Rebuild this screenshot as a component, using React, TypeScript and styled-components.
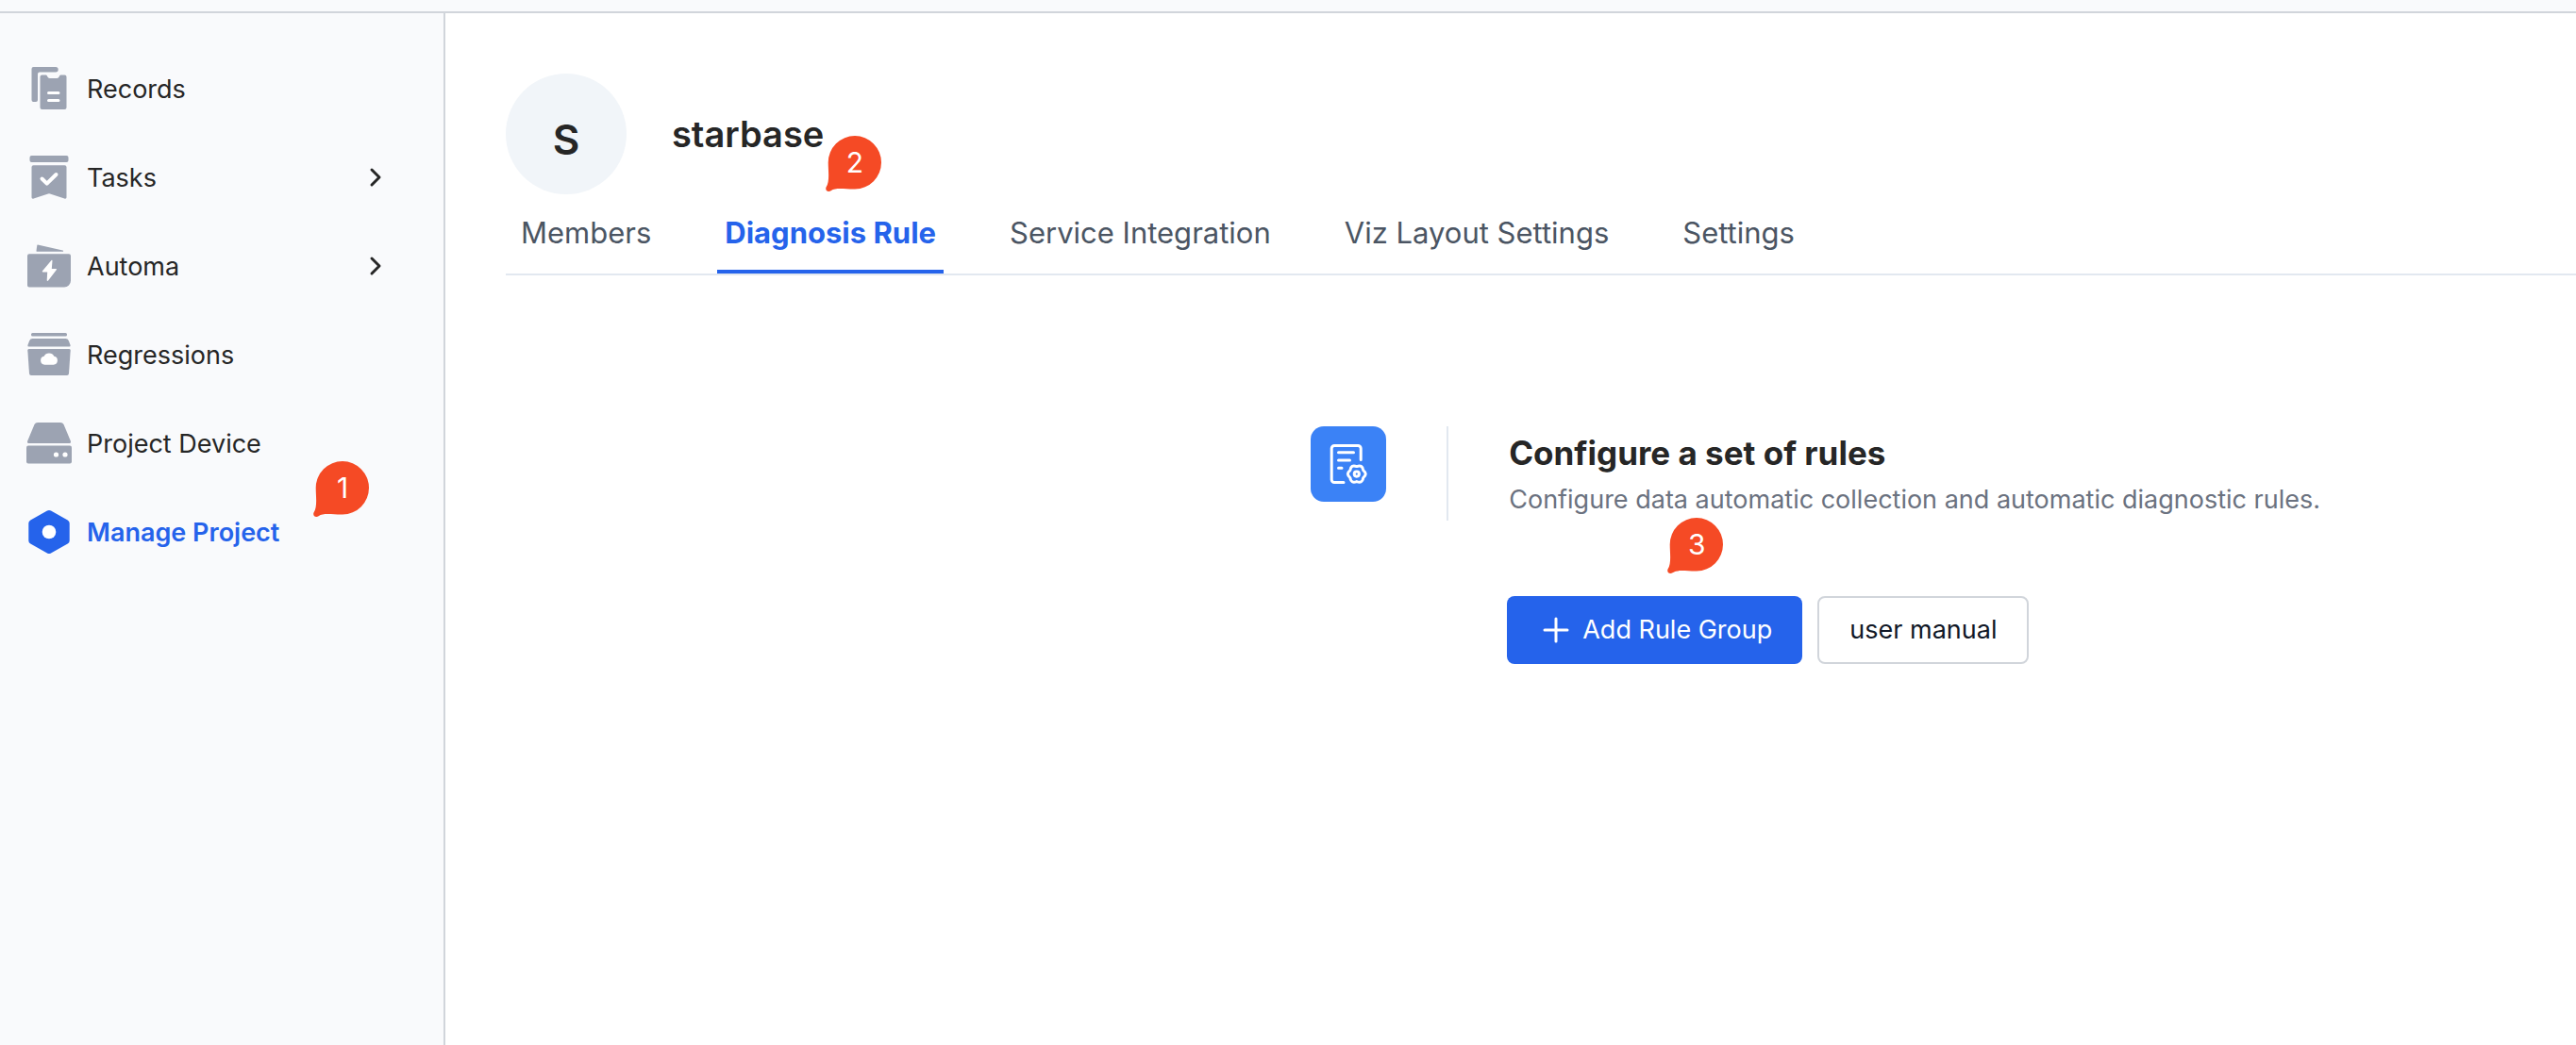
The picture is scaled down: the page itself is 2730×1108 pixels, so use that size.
import React from "react";
import styled, { createGlobalStyle, css } from "styled-components";

const blue = "#2563eb";
const ink = "#262626";
const iconGrey = "#9ca3b2";

const GlobalStyle = createGlobalStyle`
  *, *::before, *::after { box-sizing: border-box; }
  html, body { margin: 0; background: #ffffff; }
  body { font-family: Inter, "Liberation Sans", Arial, sans-serif; color: ${ink}; }
  h1, h2, p, ul { margin: 0; padding: 0; }
  ul { list-style: none; }
  a { color: inherit; text-decoration: none; }
`;

const Page = styled.div`
  min-height: 100vh;
  display: flex;
  flex-direction: column;
`;

const TopBar = styled.header`
  height: 14px;
  flex: none;
  background: #f9fafc;
  border-bottom: 2px solid #d1d5db;
`;

const Body = styled.div`
  flex: 1;
  display: flex;
`;

const Sidebar = styled.nav`
  width: 472px;
  flex: none;
  padding: 40px 56px 40px 28px;
  background: #f9fafc;
  border-right: 2px solid #d1d5db;
`;

const NavList = styled.ul`
  display: flex;
  flex-direction: column;
  gap: 14px;
`;

const NavItem = styled.li`
  position: relative;
`;

const NavLink = styled.a<{ $active?: boolean }>`
  height: 80px;
  display: flex;
  align-items: center;
  gap: 16px;
  font-size: 27px;
  line-height: 40px;
  ${({ $active }) => $active && css`
    color: ${blue};
    font-weight: 600;
  `}
`;

const NavLabel = styled.span`
  padding-top: 2px;
`;

const NavIcon = styled.svg`
  width: 48px;
  height: 48px;
  flex: none;
`;

const Chevron = styled.svg`
  width: 32px;
  height: 32px;
  margin-left: auto;
  fill: none;
  stroke: ${ink};
  stroke-width: 3;
  stroke-linecap: round;
  stroke-linejoin: round;
`;

const Main = styled.main`
  flex: 1;
  min-width: 0;
  padding: 64px 0 64px 64px;
`;

const ProjectHeader = styled.div`
  display: flex;
  align-items: center;
  gap: 48px;
`;

const Avatar = styled.div`
  width: 128px;
  height: 128px;
  padding-top: 12px;
  display: flex;
  align-items: center;
  justify-content: center;
  border-radius: 50%;
  background: #f1f5f9;
  font-size: 44px;
  font-weight: 600;
`;

const ProjectName = styled.h1`
  position: relative;
  font-size: 38px;
  line-height: 48px;
  font-weight: 600;
`;

const Tabs = styled.nav`
  display: flex;
  gap: 62px;
  padding-left: 8px;
  border-bottom: 2px solid #e2e8f0;
`;

const Tab = styled.a<{ $active?: boolean }>`
  padding: 21px 8px 19px;
  border-bottom: 4px solid transparent;
  color: #4b5563;
  font-size: 31px;
  line-height: 40px;
  white-space: nowrap;
  ${({ $active }) => $active && css`
    border-color: ${blue};
    color: ${blue};
    font-weight: 700;
  `}
`;

const EmptyState = styled.section`
  margin-top: 160px;
  display: grid;
  grid-template-columns: 7fr 11fr;
`;

const EmptyContent = styled.div`
  grid-column: 2;
  display: flex;
  align-items: flex-start;
  gap: 64px;
`;

const RuleTile = styled.div`
  width: 80px;
  height: 80px;
  flex: none;
  display: flex;
  align-items: center;
  justify-content: center;
  border-radius: 14px;
  background: #3b82f6;
`;

const Intro = styled.div`
  padding-left: 64px;
  border-left: 2px solid #e2e8f0;
`;

const IntroTitle = styled.h2`
  font-size: 35px;
  line-height: 56px;
  font-weight: 700;
`;

const IntroText = styled.p`
  padding: 2px 0;
  color: #6b7280;
  font-size: 27px;
  line-height: 40px;
`;

const Actions = styled.div`
  position: relative;
  display: flex;
  gap: 16px;
  padding: 80px 0 0 64px;
`;

const Button = styled.button<{ $primary?: boolean }>`
  height: 72px;
  padding: 0 32px;
  display: flex;
  align-items: center;
  gap: 8px;
  border: 2px solid #d1d5db;
  border-radius: 8px;
  background: #ffffff;
  color: #111827;
  font-family: inherit;
  font-size: 27px;
  line-height: 40px;
  white-space: nowrap;
  ${({ $primary }) => $primary && css`
    border: 0;
    background: ${blue};
    color: #ffffff;
  `}
`;

const Pin = styled.span<{ $left: number; $top: number }>`
  position: absolute;
  left: ${({ $left }) => $left}px;
  top: ${({ $top }) => $top}px;
  width: 60px;
  height: 60px;
  padding-left: 2px;
  color: #ffffff;
  font-size: 30px;
  line-height: 56px;
  font-weight: 400;
  text-align: center;
`;

const PinShape = styled.svg`
  position: absolute;
  inset: 0;
  width: 60px;
  height: 60px;
`;

const PinNumber = styled.span`
  position: relative;
`;

function StepPin({ step, left, top }: { step: number; left: number; top: number }) {
  return (
    <Pin $left={left} $top={top}>
      <PinShape viewBox="0 0 60 60" aria-hidden="true">
        <path
          fill="#f54a25"
          d="M31 0A28.3 28.3 0 0 1 59 28.3A28.3 28.3 0 0 1 31 56.6C21 56.8 11 54.5 5.6 58.2C2.5 60.4-.8 57.6.5 54.6C4.6 48.5 2.7 37 2.7 28.3A28.3 28.3 0 0 1 31 0Z"
        />
      </PinShape>
      <PinNumber>{step}</PinNumber>
    </Pin>
  );
}

function RecordsIcon() {
  return (
    <NavIcon viewBox="0 0 48 48" fill={iconGrey} aria-hidden="true">
      <path d="M7.5 1H31a2.3 2.3 0 0 1 0 5.4H14a2 2 0 0 0-2 2V36a2 2 0 0 1-2 2H7.500a2 2 0 0 1-2-2V3a2 2 0 0 1 2-2Z" />
      <path d="M16.5 9.500h4.200c1.500 0 1.500 3.500 4 3.500h7.600c2.500 0 2.500-3.500 4-3.500h4.200a2 2 0 0 1 2 2V44a2 2 0 0 1-2 2h-24a2 2 0 0 1-2-2V11.500a2 2 0 0 1 2-2Z" />
      <path d="M23.500 28.500h10.500M23.500 36.500h10.500" stroke="#fff" strokeWidth="3" strokeLinecap="round" />
    </NavIcon>
  );
}

function TasksIcon() {
  return (
    <NavIcon viewBox="0 0 48 48" fill={iconGrey} aria-hidden="true">
      <rect x="3.5" y="1" width="41" height="7" rx="2" />
      <path d="M7.5 11.2h33a2 2 0 0 1 2 2V45c0 1.500-1 2-2.200 1.500L25 41.400q-1-.4-2 0L7.700 46.500C6.500 47 5.500 46.500 5.500 45V13.200a2 2 0 0 1 2-2Z" />
      <path d="m16.500 25.500 5.200 5.200L31.500 21" fill="none" stroke="#fff" strokeWidth="4" strokeLinecap="round" strokeLinejoin="round" />
    </NavIcon>
  );
}

function AutomaIcon() {
  return (
    <NavIcon viewBox="0 0 48 48" fill={iconGrey} aria-hidden="true">
      <path d="M12 1.500 38.500 7.400c1 .3.800 1.400-.2 1.400H11q-.6 0-.5-.8L11.300 2q.1-.6.7-.5Z" />
      <path d="M3 11.300h42a2 2 0 0 1 2 2V39.500a7 7 0 0 1-7 7H3a2 2 0 0 1-2-2V13.300a2 2 0 0 1 2-2Z" />
      <path d="M26.500 18 17 29.300c-.5.700-.2 1.200.5 1.200h4.700L21.700 39c0 1.200.8 1.300 1.400.600l8.600-11.400c.5-.7.200-1.200-.5-1.200h-4.400L27.500 18.500c0-.8-.5-1-1-.5Z" fill="#fff" />
    </NavIcon>
  );
}

function RegressionsIcon() {
  return (
    <NavIcon viewBox="0 0 48 48" fill={iconGrey} aria-hidden="true">
      <rect x="5" y="1" width="38" height="3.6" rx="1.5" />
      <path d="M6.500 7h35q2.500 0 3.300 2.200L46.600 14q.4 1.500-1.200 1.500H2.600Q1 15.500 1.400 14L3.200 9.200Q4 7 6.500 7Z" />
      <path d="M2.500 18h43q1.300 0 1.200 1.500L45 44q-.2 2-2 2H5q-1.800 0-2-2L1.300 19.500Q1.200 18 2.500 18Z" />
      <path d="M19.300 34.700a4.500 4.500 0 0 1-.6-8.900 5.900 5.900 0 0 1 10.600 0 4.500 4.500 0 0 1-.6 8.900Z" fill="#fff" />
    </NavIcon>
  );
}

function DeviceIcon() {
  return (
    <NavIcon viewBox="0 0 48 48" fill={iconGrey} aria-hidden="true">
      <path d="M12 2h24q2.500 0 3.500 2L47 22q.5 2-1.300 2H2.300Q.5 24 1 22L8.500 4q1-2 3.500-2Z" />
      <rect x="0" y="26.5" width="48" height="19" rx="2" />
      <circle cx="31.500" cy="36" r="2.6" fill="#fff" />
      <circle cx="41" cy="36" r="2.6" fill="#fff" />
    </NavIcon>
  );
}

function ManageIcon() {
  return (
    <NavIcon viewBox="0 0 48 48" fill={blue} aria-hidden="true">
      <path d="M22 1.600q2-1.100 4 0l17.700 9.800q2 1.100 2 3.300v18.600q0 2.200-2 3.300L26 46.400q-2 1.100-4 0L4.300 36.600q-2-1.100-2-3.300V14.700q0-2.200 2-3.300Z" />
      <circle cx="24" cy="24" r="7.3" fill="#fff" />
    </NavIcon>
  );
}

function RuleIcon() {
  return (
    <svg width="40" height="44" viewBox="0 0 40 44" fill="none" stroke="#fff" strokeWidth="3" strokeLinecap="round" strokeLinejoin="round" aria-hidden="true">
      <path d="M33.200 17.500V5.500a3 3 0 0 0-3-3h-25a3 3 0 0 0-3 3v33a3 3 0 0 0 3 3H15" />
      <path d="M9.500 9.700h16M9.500 18h12M9.500 26.300h3.500" />
      <g transform="translate(28.800 32.600)">
        <path d="M6.900-4Q12 0 6.900 4Q6 10.400 0 8Q-6 10.400-6.900 4Q-12 0-6.900-4Q-6-10.400 0-8Q6-10.400 6.900-4Z" />
        <circle r="2.600" />
      </g>
    </svg>
  );
}

const navItems = [
  { label: "Records", Icon: RecordsIcon },
  { label: "Tasks", Icon: TasksIcon, expandable: true },
  { label: "Automa", Icon: AutomaIcon, expandable: true },
  { label: "Regressions", Icon: RegressionsIcon },
  { label: "Project Device", Icon: DeviceIcon },
  { label: "Manage Project", Icon: ManageIcon, active: true },
];

const tabs = ["Members", "Diagnosis Rule", "Service Integration", "Viz Layout Settings", "Settings"];

export default function App() {
  return (
    <Page>
      <GlobalStyle />
      <TopBar />
      <Body>
        <Sidebar aria-label="Project">
          <NavList>
            {navItems.map(({ label, Icon, expandable, active }) => (
              <NavItem key={label}>
                <NavLink href="#" $active={active} aria-current={active ? "page" : undefined}>
                  <Icon />
                  <NavLabel>{label}</NavLabel>
                  {expandable && (
                    <Chevron viewBox="0 0 32 32" aria-hidden="true">
                      <path d="m12 8 8 8-8 8" />
                    </Chevron>
                  )}
                </NavLink>
                {active && <StepPin step={1} left={304} top={-35} />}
              </NavItem>
            ))}
          </NavList>
        </Sidebar>
        <Main>
          <ProjectHeader>
            <Avatar>S</Avatar>
            <ProjectName>
              starbase
              <StepPin step={2} left={163} top={26} />
            </ProjectName>
          </ProjectHeader>
          <Tabs aria-label="Project settings">
            {tabs.map((tab) => (
              <Tab key={tab} href="#" $active={tab === "Diagnosis Rule"}>{tab}</Tab>
            ))}
          </Tabs>
          <EmptyState>
            <EmptyContent>
              <RuleTile><RuleIcon /></RuleTile>
              <div>
                <Intro>
                  <IntroTitle>Configure a set of rules</IntroTitle>
                  <IntroText>Configure data automatic collection and automatic diagnostic rules.</IntroText>
                </Intro>
                <Actions>
                  <Button type="button" $primary>
                    <svg width="40" height="40" viewBox="0 0 40 40" fill="none" stroke="#fff" strokeWidth="3" strokeLinecap="round" aria-hidden="true">
                      <path d="M20 8v24M8 20h24" />
                    </svg>
                    Add Rule Group
                  </Button>
                  <Button type="button">user manual</Button>
                  <StepPin step={3} left={234} top={-3} />
                </Actions>
              </div>
            </EmptyContent>
          </EmptyState>
        </Main>
      </Body>
    </Page>
  );
}
